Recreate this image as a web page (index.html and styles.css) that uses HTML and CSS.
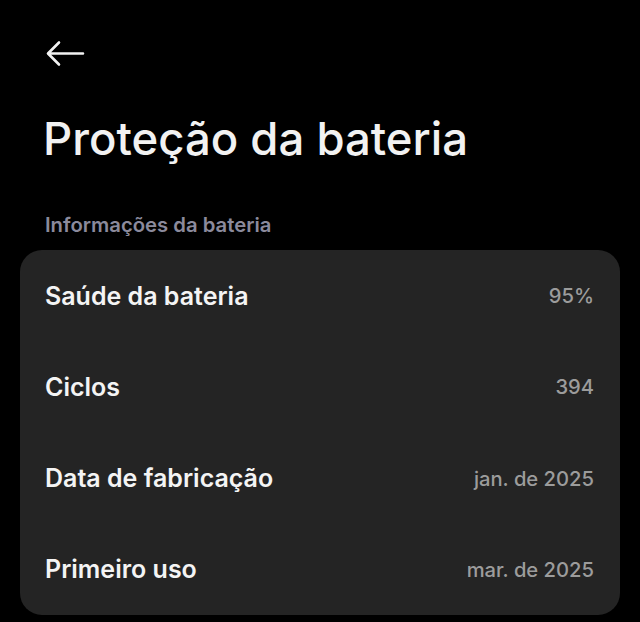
FILE: index.html
```html
<!DOCTYPE html>
<html lang="pt">
<head>
<meta charset="utf-8">
<link rel="stylesheet" href="styles.css">
</head>
<body>
<div class="screen">
  <header class="topbar">
    <svg class="back" width="40" height="28" viewBox="0 0 40 28" aria-label="Voltar">
      <path d="M38 13.5H3.5M14 2.5L3 13.5L14 24.5" fill="none" stroke="#f2f2f2" stroke-width="2.6" stroke-linecap="round" stroke-linejoin="round"/>
    </svg>
  </header>
  <h1 class="title">Proteção da bateria</h1>
  <div class="section-label">Informações da bateria</div>
  <div class="card">
    <div class="row"><span class="label">Saúde da bateria</span><span class="value">95%</span></div>
    <div class="row"><span class="label">Ciclos</span><span class="value">394</span></div>
    <div class="row"><span class="label">Data de fabricação</span><span class="value">jan. de 2025</span></div>
    <div class="row"><span class="label">Primeiro uso</span><span class="value">mar. de 2025</span></div>
  </div>
</div>
</body>
</html>
```
FILE: styles.css
```css
html, body {
  margin: 0;
  padding: 0;
  background: #000;
}
body {
  font-family: Inter, "Noto Sans", "Liberation Sans", sans-serif;
  color: #f2f2f2;
  width: 640px;
  height: 622px;
  overflow: hidden;
}
.screen {
  display: flex;
  flex-direction: column;
  padding: 0 20px;
}
.topbar {
  height: 108px;
  display: flex;
  align-items: flex-start;
  padding-top: 40px;
  padding-left: 25px;
  box-sizing: border-box;
}
.back {
  display: block;
}
.title {
  margin: 0;
  padding-left: 23px;
  font-size: 45.5px;
  font-weight: 500;
  line-height: 62px;
  letter-spacing: 0;
}
.section-label {
  margin-top: 43px;
  padding-left: 25px;
  font-size: 20.3px;
  font-weight: 600;
  color: #8b8a9c;
  line-height: 24px;
}
.card {
  margin-top: 13px;
  background: #242424;
  border-radius: 22px;
  display: flex;
  flex-direction: column;
}
.row {
  height: 91.25px;
  display: flex;
  align-items: center;
  justify-content: space-between;
  padding: 0 26px 0 25px;
}
.label {
  font-size: 25px;
  font-weight: 600;
  color: #f4f4f4;
}
.value {
  font-size: 20.2px;
  font-weight: 500;
  color: #9c9c9c;
}
```
